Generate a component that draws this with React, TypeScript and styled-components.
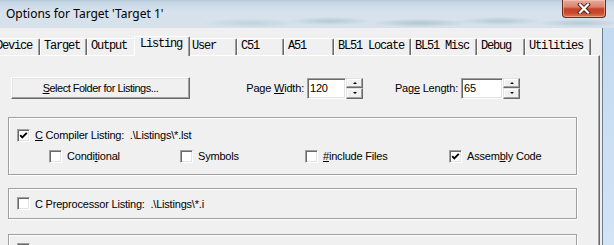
import React from "react";
import styled, { createGlobalStyle } from "styled-components";

const GlobalStyle = createGlobalStyle`
  html, body { margin: 0; padding: 0; background: #f0f0f0; }
  body { font-family: "Liberation Sans", Arial, sans-serif; }
  * { box-sizing: border-box; }
`;

const Window = styled.div`
  width: 614px;
  height: 245px;
  overflow: hidden;
  display: flex;
  flex-direction: column;
`;

const TitleBar = styled.div`
  flex: 0 0 28px;
  display: flex;
  align-items: flex-start;
  background:
    radial-gradient(ellipse 70px 7px at 250px 23px, rgba(120, 160, 165, 0.22), transparent 70%),
    radial-gradient(ellipse 60px 6px at 330px 21px, rgba(100, 150, 150, 0.3), transparent 70%),
    radial-gradient(ellipse 70px 6px at 420px 23px, rgba(100, 150, 150, 0.35), transparent 70%),
    radial-gradient(ellipse 60px 6px at 500px 21px, rgba(100, 150, 150, 0.3), transparent 70%),
    radial-gradient(ellipse 60px 6px at 580px 23px, rgba(100, 150, 150, 0.3), transparent 70%),
    linear-gradient(180deg, #b5c9dc 0px, #c9d8e6 3px, #d7e2ed 12px, #d6e1ec 28px);
`;

const TitleText = styled.div`
  font-family: "Noto Sans", "Open Sans", sans-serif;
  font-size: 12px;
  line-height: 28px;
  padding-left: 6px;
  color: #000;
  white-space: nowrap;
`;

const CloseButton = styled.div`
  margin-left: auto;
  margin-right: 8px;
  width: 44px;
  height: 18px;
  display: flex;
  align-items: center;
  justify-content: center;
  border: 1px solid #6a2a1e;
  border-top: none;
  border-radius: 0 0 4px 4px;
  background: linear-gradient(180deg, #e9a99a 0%, #dc8471 40%, #c4442a 52%, #c8492e 75%, #dc7656 100%);
  box-shadow: inset 0 0 0 1px rgba(255, 220, 210, 0.45);
`;

const Body = styled.div`
  flex: 1;
  display: flex;
  min-height: 0;
`;

const Client = styled.div`
  flex: 0 0 602px;
  background: #f0f0f0;
  padding-top: 8px;
  display: flex;
  flex-direction: column;
  overflow: hidden;
`;

const FrameEdge = styled.div`
  flex: 1;
  border-left: 1px solid #6f7e8c;
  background: linear-gradient(180deg, #c4daf0, #d2e4f6);
`;

const TabStrip = styled.div`
  display: flex;
  align-items: flex-end;
  height: 19px;
  margin-left: -8px;
`;

const Tab = styled.div<{ $w: number; $active?: boolean }>`
  position: relative;
  z-index: ${(p) => (p.$active ? 2 : 1)};
  flex: 0 0 ${(p) => p.$w + (p.$active ? 4 : 0)}px;
  height: ${(p) => (p.$active ? 20 : 17)}px;
  margin: ${(p) => (p.$active ? "0 -2px -1px" : "0")};
  padding-left: ${(p) => (p.$active ? 5 : 3)}px;
  background: #f0f0f0;
  border-top: 1px solid #fff;
  border-left: 1px solid #fff;
  border-right: 1px solid #696969;
  box-shadow: inset -1px 0 0 #a0a0a0;
  border-radius: 2px 2px 0 0;
  font-family: "Liberation Mono", "Courier New", monospace;
  font-size: 12px;
  letter-spacing: -1.2px;
  line-height: 15px;
  white-space: nowrap;
  color: #000;
`;

const Panel = styled.div`
  width: 602px;
  margin-left: -2px;
  flex: 1;
  border-top: 1px solid #fff;
  border-left: 1px solid #fff;
  border-right: 1px solid #696969;
  box-shadow: inset -1px 0 0 #a0a0a0;
  padding: 21px 0 0 9px;
  display: flex;
  flex-direction: column;
  font-size: 11px;
  letter-spacing: -0.2px;
  color: #000;
`;

const TopRow = styled.div`
  display: flex;
  align-items: center;
  height: 22px;
`;

const PushButton = styled.div`
  margin-left: 3px;
  width: 179px;
  height: 22px;
  display: flex;
  align-items: center;
  justify-content: center;
  background: #f0f0f0;
  border: 1px solid;
  border-color: #fff #696969 #696969 #fff;
  box-shadow: inset -1px -1px 0 #a0a0a0, inset 1px 1px 0 #e3e3e3;
  letter-spacing: -0.5px;
  white-space: nowrap;
`;

const FieldLabel = styled.div<{ $w: number }>`
  width: ${(p) => p.$w}px;
  text-align: right;
  white-space: nowrap;
`;

const SpinBox = styled.div`
  display: flex;
  height: 21px;
  margin-left: 3px;
`;

const SpinInput = styled.div<{ $w: number }>`
  width: ${(p) => p.$w}px;
  background: #fff;
  border: 1px solid;
  border-color: #a0a0a0 #fff #fff #a0a0a0;
  box-shadow: inset 1px 1px 0 #696969, inset -1px -1px 0 #e3e3e3;
  padding-left: 2px;
  line-height: 19px;
`;

const SpinButtons = styled.div`
  width: 17px;
  display: flex;
  flex-direction: column;
`;

const SpinHalf = styled.div<{ $down?: boolean }>`
  flex: 1;
  display: flex;
  align-items: center;
  justify-content: center;
  background: #f0f0f0;
  border: 1px solid;
  border-color: #e3e3e3 #696969 #696969 #e3e3e3;
  box-shadow: inset -1px -1px 0 #a0a0a0, inset 1px 1px 0 #fff;
  &::after {
    content: "";
    width: 0;
    height: 0;
    border-left: 2px solid transparent;
    border-right: 2px solid transparent;
    ${(p) => (p.$down ? "border-top: 2px solid #000;" : "border-bottom: 2px solid #000;")}
  }
`;

const GroupBox = styled.div<{ $mt: number; $h: number; $center?: boolean }>`
  margin-top: ${(p) => p.$mt}px;
  width: 569px;
  flex: 0 0 ${(p) => p.$h}px;
  border: 1px solid #a0a0a0;
  box-shadow: inset 1px 1px 0 #fff, 1px 1px 0 #fff;
  padding: ${(p) => (p.$center ? "0 0 0 8px" : "10px 0 0 8px")};
  display: flex;
  flex-direction: column;
  justify-content: ${(p) => (p.$center ? "center" : "flex-start")};
  gap: 7px;
`;

const OptionRow = styled.div`
  display: grid;
  grid-template-columns: 131px 125px 144px auto;
  padding-left: 32px;
`;

const Check = styled.label`
  display: flex;
  align-items: center;
  height: 14px;
  white-space: nowrap;
`;

const Box = styled.span`
  flex: 0 0 13px;
  width: 13px;
  height: 13px;
  margin-right: 5px;
  background: #fff;
  border: 1px solid;
  border-color: #a0a0a0 #fff #fff #a0a0a0;
  box-shadow: inset 1px 1px 0 #696969, inset -1px -1px 0 #e3e3e3;
  display: flex;
  align-items: center;
  justify-content: center;
`;

const Acc = styled.span`
  text-decoration: underline;
`;

const CheckBox: React.FC<{ checked?: boolean; children?: React.ReactNode }> = ({ checked, children }) => (
  <Check>
    <Box>
      {checked && (
        <svg width="9" height="9" viewBox="0 0 9 9">
          <polyline points="1.2,4.2 3.3,6.4 7.8,1.8" fill="none" stroke="#000" strokeWidth="1.9" />
        </svg>
      )}
    </Box>
    {children && <span>{children}</span>}
  </Check>
);

const tabs: { label: string; w: number; active?: boolean }[] = [
  { label: "Device", w: 48 },
  { label: "Target", w: 47 },
  { label: "Output", w: 49 },
  { label: "Listing", w: 52, active: true },
  { label: "User", w: 49 },
  { label: "C51", w: 47 },
  { label: "A51", w: 50 },
  { label: "BL51 Locate", w: 77 },
  { label: "BL51 Misc", w: 66 },
  { label: "Debug", w: 48 },
  { label: "Utilities", w: 66 },
];

export default function App() {
  return (
    <>
      <GlobalStyle />
      <Window>
        <TitleBar>
          <TitleText>Options for Target 'Target 1'</TitleText>
          <CloseButton>
            <svg width="14" height="11" viewBox="0 0 14 11">
              <path d="M3 1.5 L11 9.5 M11 1.5 L3 9.5" stroke="#4a2018" strokeWidth="4" strokeLinecap="square" />
              <path d="M3 1.5 L11 9.5 M11 1.5 L3 9.5" stroke="#fff" strokeWidth="2.2" strokeLinecap="square" />
            </svg>
          </CloseButton>
        </TitleBar>
        <Body>
          <Client>
            <TabStrip>
              {tabs.map((t) => (
                <Tab key={t.label} $w={t.w} $active={t.active}>
                  {t.label}
                </Tab>
              ))}
            </TabStrip>
            <Panel>
              <TopRow>
                <PushButton>
                  <span>
                    <Acc>S</Acc>elect Folder for Listings...
                  </span>
                </PushButton>
                <FieldLabel $w={114}>
                  Page <Acc>W</Acc>idth:
                </FieldLabel>
                <SpinBox>
                  <SpinInput $w={39}>120</SpinInput>
                  <SpinButtons>
                    <SpinHalf />
                    <SpinHalf $down />
                  </SpinButtons>
                </SpinBox>
                <FieldLabel $w={95}>
                  Pag<Acc>e</Acc> Length:
                </FieldLabel>
                <SpinBox>
                  <SpinInput $w={42}>65</SpinInput>
                  <SpinButtons>
                    <SpinHalf />
                    <SpinHalf $down />
                  </SpinButtons>
                </SpinBox>
              </TopRow>

              <GroupBox $mt={18} $h={58}>
                <CheckBox checked>
                  <Acc>C</Acc> Compiler Listing:&nbsp; .\Listings\*.lst
                </CheckBox>
                <OptionRow>
                  <CheckBox>
                    Condi<Acc>t</Acc>ional
                  </CheckBox>
                  <CheckBox>Symbols</CheckBox>
                  <CheckBox>
                    <Acc>#</Acc>include Files
                  </CheckBox>
                  <CheckBox checked>
                    Assem<Acc>b</Acc>ly Code
                  </CheckBox>
                </OptionRow>
              </GroupBox>

              <GroupBox $mt={13} $h={31} $center>
                <CheckBox>C Preprocessor Listing:&nbsp; .\Listings\*.i</CheckBox>
              </GroupBox>

              <GroupBox $mt={15} $h={31} $center>
                <CheckBox />
              </GroupBox>
            </Panel>
          </Client>
          <FrameEdge />
        </Body>
      </Window>
    </>
  );
}
